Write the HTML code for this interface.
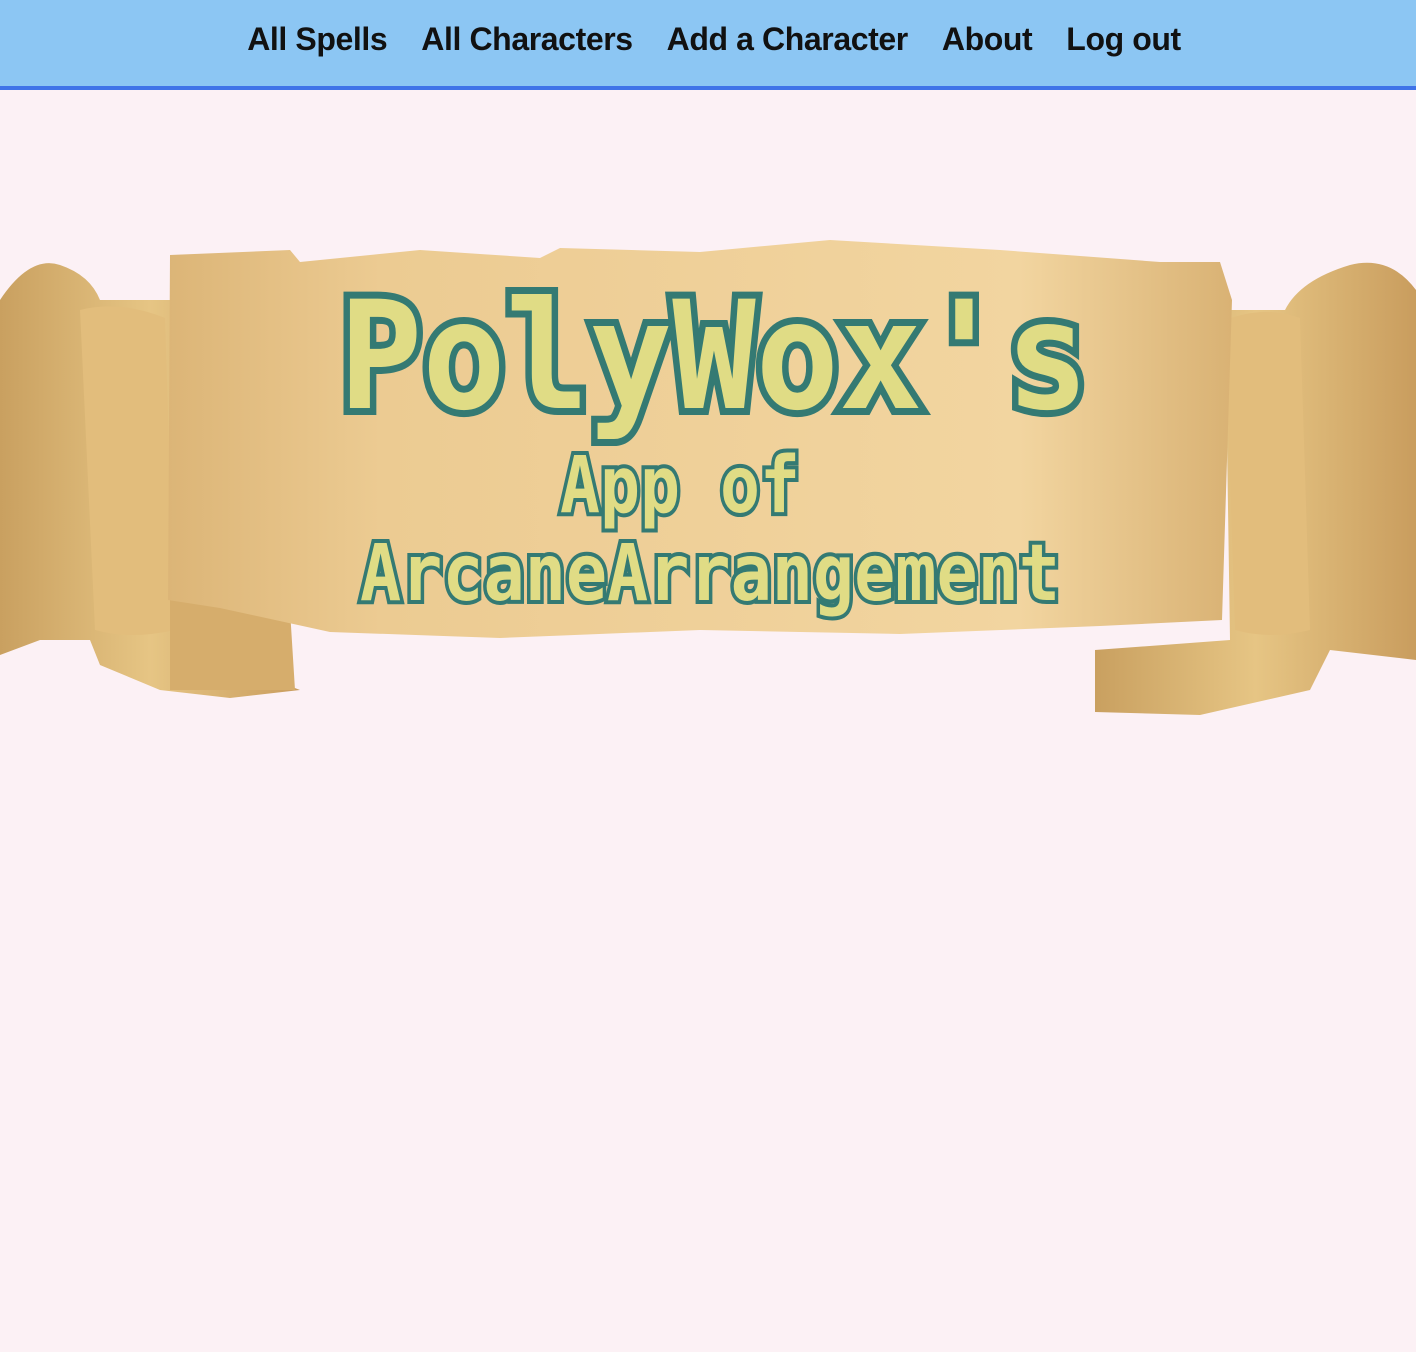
<!DOCTYPE html>
<html><head><meta charset="utf-8"><style>
html,body{margin:0;padding:0}
body{width:1416px;height:1352px;background:#fcf1f5;overflow:hidden;font-family:"Liberation Sans",sans-serif}
nav{height:86px;background:#8cc6f3;border-bottom:4px solid #3f73e8;display:flex;justify-content:center;align-items:center;gap:34px;padding-left:12px;box-sizing:content-box}
nav a{font-weight:bold;font-size:32px;color:#111;text-decoration:none;letter-spacing:-0.4px;margin-top:-8px}
svg{position:absolute;left:0;top:0}
</style></head><body>
<nav><a>All Spells</a><a>All Characters</a><a>Add a Character</a><a>About</a><a>Log out</a></nav>
<svg width="1416" height="1352" viewBox="0 0 1416 1352">
<defs>
<linearGradient id="p" x1="0" x2="1"><stop offset="0" stop-color="#dcb577"/><stop offset="0.2" stop-color="#eccb92"/><stop offset="0.8" stop-color="#f2d5a0"/><stop offset="1" stop-color="#d9b274"/></linearGradient>
<linearGradient id="r" x1="0" x2="1"><stop offset="0" stop-color="#c9a060"/><stop offset="0.5" stop-color="#e6c584"/><stop offset="1" stop-color="#c99d5e"/></linearGradient>
</defs>
<path d="M0 300 Q30 255 60 265 Q90 275 100 300 L170 300 L170 640 L300 690 L230 698 L160 690 L100 665 L90 640 L40 640 L0 655Z" fill="url(#r)"/>
<path d="M80 310 Q120 300 165 318 L175 630 Q130 640 95 630 Z" fill="#e2bd7c"/>
<path d="M170 600 L290 610 L295 690 L170 690Z" fill="#d6ad6c"/>
<path d="M1416 290 Q1390 255 1350 265 Q1300 280 1285 310 L1225 310 L1230 640 L1095 650 L1095 712 L1200 715 L1310 690 L1330 650 L1416 660Z" fill="url(#r)"/>
<path d="M1225 320 Q1265 305 1300 318 L1310 630 Q1270 640 1235 630 Z" fill="#e2bd7c"/>
<path d="M170 255 L290 250 L300 262 L420 250 L540 258 L560 248 L700 252 L830 240 L1000 250 L1160 262 L1220 262 L1232 300 L1222 620 L1100 626 L900 634 L700 630 L500 638 L330 632 L220 608 L168 600 Z" fill="url(#p)"/>
<g font-family="'DejaVu Sans Mono','Liberation Mono',monospace" font-weight="bold" fill="#e0dc85" stroke="#347a73" stroke-width="14" stroke-linejoin="miter" paint-order="stroke" text-anchor="middle">
<text x="714" y="408" font-size="150" textLength="750" lengthAdjust="spacingAndGlyphs">PolyWox's</text>
<text x="680" y="512" font-size="78" textLength="240" lengthAdjust="spacingAndGlyphs" stroke-width="8">App of</text>
<text x="710" y="600" font-size="78" textLength="700" lengthAdjust="spacingAndGlyphs" stroke-width="8">ArcaneArrangement</text>
</g>
</svg>
</body></html>
